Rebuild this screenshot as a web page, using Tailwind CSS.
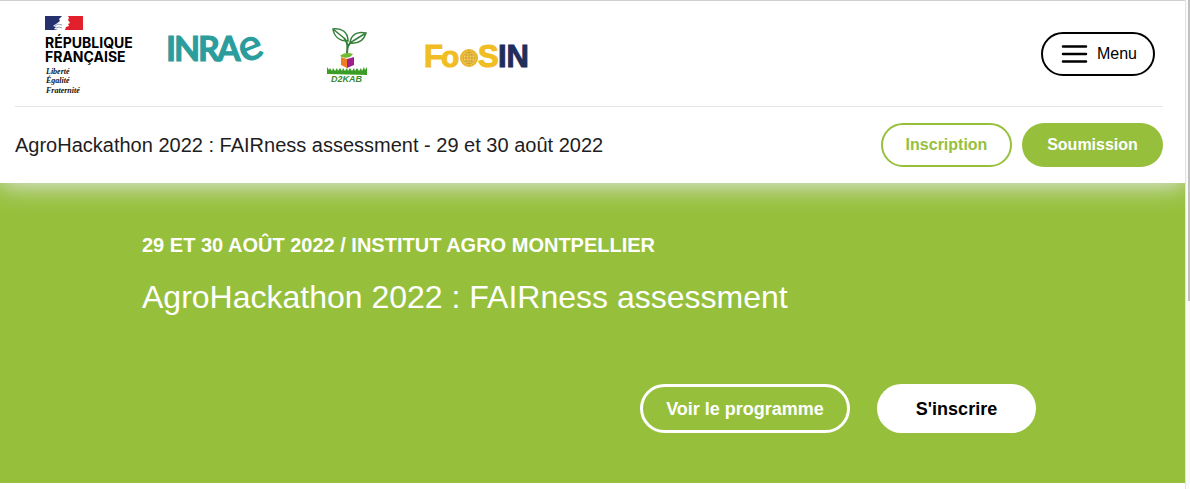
<!DOCTYPE html>
<html lang="fr">
  <head>
    <meta charset="UTF-8" />
    <meta name="viewport" content="width=device-width, initial-scale=1.0" />
    <title>AgroHackathon 2022</title>
    <script src="https://cdn.jsdelivr.net/npm/@tailwindcss/browser@4"></script>
  </head>
  <body class="flex min-h-screen bg-white font-['Liberation_Sans',Arial,sans-serif] text-[#1e1e1e]">
    <div class="flex-1 min-w-0 overflow-hidden">
      <header class="relative z-10 bg-white border-t border-[#cfcfcf] pl-[15px] pr-[22px] shadow-[0_2px_24px_#e8e8f0]">
        <div class="flex items-start justify-between border-b border-[#e5e5e5] h-[106px] pr-2">
          <div class="flex items-start pl-7 pt-3">
            <a href="#" aria-label="République Française">
              <svg class="w-[92px] h-[84px]" viewBox="0 0 92 84">
                <path d="M2 3h17l-3 3 1 2-4 3-3 2 3 1-2 2 4 1H2z" fill="#26306f" />
                <path d="M25 3h15v14H22l1-3 3-1-1-2 2-1-2-3 1-2z" fill="#e1202c" />
                <path d="M12 13l3-2 4 1M13 15l3-1 3 1" fill="none" stroke="#7881ae" stroke-width=".8" />
                <g fill="#000" font-family="Inter, sans-serif" font-size="14" font-weight="700">
                  <text x="2" y="35">RÉPUBLIQUE</text>
                  <text x="2" y="49">FRANÇAISE</text>
                </g>
                <g fill="#111" font-family="Liberation Serif, serif" font-size="8" font-style="italic" font-weight="700">
                  <text x="3" y="61">Liberté</text>
                  <text x="3" y="70">Égalité</text>
                  <text x="3" y="80">Fraternité</text>
                </g>
              </svg>
            </a>
            <a href="#" class="ml-8 mt-4" aria-label="INRAE">
              <svg class="w-[100px] h-[44px] overflow-visible" viewBox="0 0 100 44" fill="#2a9d9c" stroke="#2a9d9c" font-family="Lato, sans-serif">
                <text x="-1 7 31 50" y="32" font-size="34" font-weight="700" stroke-width="1">INRA</text>
                <text x="77" y="35" font-size="45" font-weight="700" rotate="-22" stroke="none">e</text>
              </svg>
            </a>
            <a href="#" class="ml-[58px] mt-3" aria-label="D2KAB">
              <svg class="w-[48px] h-[60px]" viewBox="0 0 48 60">
                <g fill="none" stroke="#357f38" stroke-width="1.5">
                  <path d="M22 30C22 22 23 19 28 16M22 30C22 23 24 19 19 13" stroke-width="2" />
                  <path d="M8 4c9-1 15 3 15 12C14 16 9 11 8 4zM8 4l11 9" />
                  <path d="M41 8c-8-2-15 1-16 10 9 1 14-3 16-10zM41 8L28 16" />
                </g>
                <path d="M16 32l6 2v9l-6-3z" fill="#f07d20" />
                <path d="M22 34l7-2v8l-7 3z" fill="#a0208b" />
                <path d="M15 31c3-3 8-4 13-2-2 4-8 5-13 2z" fill="#70bb33" />
                <path d="M2 49v-7l2 3 1-2 2 3 1-3 2 3 2-3 1 3 2-3 2 3 1-3 2 3 2-3 1 3 2-3 2 3 2-3 1 3 2-3 2 3 2-3 1 3 2-4 1 3 2-3v8z" fill="#3a9d26" />
                <text x="6" y="57" fill="#398a31" font-family="Liberation Sans, sans-serif" font-size="9" font-style="italic" font-weight="700">D2KAB</text>
              </svg>
            </a>
            <a href="#" class="ml-[51px] mt-6" aria-label="FooSIN">
              <svg class="w-[110px] h-[36px]" viewBox="0 0 110 36" font-family="Liberation Sans, sans-serif" font-size="31" font-weight="700" stroke-width="1">
                <g fill="#f0bd22" stroke="#f0bd22">
                  <text x="0" y="30">F</text>
                  <text x="17" y="30" font-size="30">o</text>
                  <text x="54" y="30">S</text>
                </g>
                <text x="74" y="30" fill="#202e5b" stroke="#202e5b">IN</text>
                <circle cx="45" cy="21" r="8" fill="#f7d35c" stroke="#eab326" stroke-width="2" />
                <g fill="none" stroke="#c9982c" stroke-width=".8">
                  <circle cx="45" cy="21" r="6" />
                  <ellipse cx="45" cy="21" rx="3" ry="6" />
                  <path d="M45 15v12M39 21h12M40 18h10M40 24h10" />
                </g>
              </svg>
            </a>
          </div>
          <button type="button" class="flex items-center mt-[31px] h-11 px-4 gap-2 border-2 border-black rounded-full text-base text-black">
            <svg class="w-[30px] h-5" viewBox="0 0 30 20" stroke="#000" stroke-width="2.5" stroke-linecap="round">
              <path d="M4 2.5h23M4 10h23M4 17.5h23" />
            </svg>
            Menu
          </button>
        </div>
        <div class="flex items-center justify-between h-[76px]">
          <p class="text-xl">AgroHackathon 2022 : FAIRness assessment - 29 et 30 août 2022</p>
          <div class="flex gap-[10px] text-base font-bold">
            <a href="#" class="flex items-center justify-center h-11 w-[131px] border-2 border-[#96c03c] rounded-full text-[#96c03c]">Inscription</a>
            <a href="#" class="flex items-center justify-center h-11 w-[141px] bg-[#96c03c] rounded-full text-white">Soumission</a>
          </div>
        </div>
      </header>
      <main class="bg-[#96c03c] pl-[142px] pr-[149px] pt-12 pb-[50px] text-white">
        <p class="text-xl leading-7 font-bold uppercase">29 et 30 août 2022 / Institut Agro Montpellier</p>
        <h1 class="mt-4 text-[32px] leading-11">AgroHackathon 2022 : FAIRness assessment</h1>
        <div class="flex justify-end gap-[27px] mt-[65px] text-lg font-bold">
          <a href="#" class="flex items-center justify-center w-[210px] h-[49px] border-3 border-white rounded-full">Voir le programme</a>
          <a href="#" class="flex items-center justify-center w-[159px] h-[49px] bg-white rounded-full text-black">S'inscrire</a>
        </div>
      </main>
    </div>
    <div class="w-[5px] bg-[#fafafa] border-l border-[#e3e3e3] flex justify-end">
      <div class="w-[2px] h-[301px] bg-[#c1c1c1]"></div>
    </div>
  </body>
</html>
